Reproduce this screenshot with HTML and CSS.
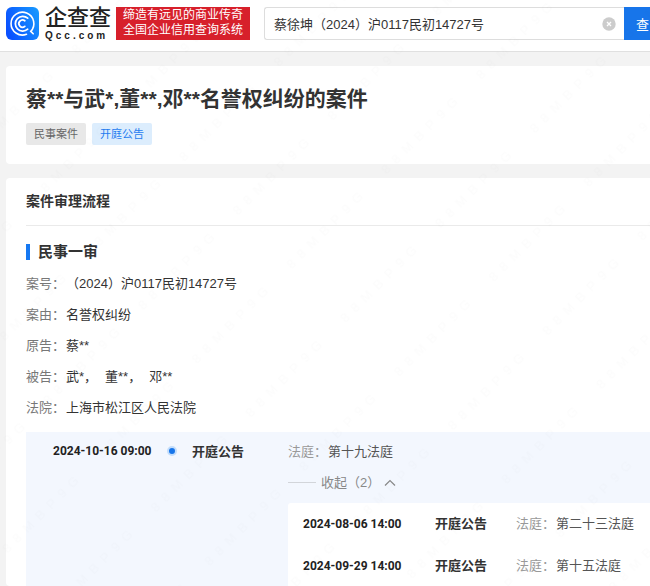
FILE: index.html
```html
<!DOCTYPE html>
<html lang="zh-CN">
<head>
<meta charset="utf-8">
<title>企查查</title>
<link rel="stylesheet" href="styles.css">
</head>
<body>
<header class="header">
  <a class="brand" href="#">
    <svg class="brand-icon" viewBox="0 0 33 33" aria-hidden="true">
      <defs>
        <linearGradient id="brand-fill" x1="0" y1="0.6" x2="1" y2="0.2">
          <stop offset="0" stop-color="#0a50ff"/>
          <stop offset="1" stop-color="#1697ff"/>
        </linearGradient>
      </defs>
      <rect width="33" height="33" rx="6" fill="url(#brand-fill)"/>
      <g fill="none" stroke="#fff" stroke-linecap="round">
        <path stroke-width="1.6" d="M20.5 27.3A11.4 11.4 0 1 1 24.8 24.4L27.2 26.8"/>
        <path stroke-width="1.7" d="M21.7 11.2A7.4 7.4 0 1 0 21.7 22.2"/>
        <path stroke-width="1.8" d="M18.8 13.8A3.6 3.6 0 1 0 18.8 19.4"/>
      </g>
    </svg>
    <span class="brand-name">
      <span class="brand-cn">企查查</span>
      <span class="brand-en">Qcc.com</span>
    </span>
    <span class="slogan">缔造有远见的商业传奇<br>全国企业信用查询系统</span>
  </a>
  <form class="search">
    <div class="search-box">
      <input class="search-input" type="text" aria-label="搜索" value="蔡徐坤（2024）沪0117民初14727号">
      <button class="search-clear" type="reset" aria-label="清除">
        <svg viewBox="0 0 14 14" aria-hidden="true">
          <circle cx="7" cy="7" r="6.7" fill="#ccc"/>
          <path d="M5 5l4 4M9 5l-4 4" stroke="#fff" stroke-width="1.3" fill="none"/>
        </svg>
      </button>
    </div>
    <button class="search-submit" type="submit">查</button>
  </form>
</header>

<main class="main">
  <section class="card summary">
    <h1 class="case-title">蔡**与武*,董**,邓**名誉权纠纷的案件</h1>
    <div class="tags">
      <span class="tag">民事案件</span>
      <span class="tag tag-blue">开庭公告</span>
    </div>
  </section>

  <section class="card process">
    <h2 class="card-title">案件审理流程</h2>
    <h3 class="stage">民事一审</h3>
    <dl class="facts">
      <div class="fact"><dt>案号：</dt><dd>（2024）沪0117民初14727号</dd></div>
      <div class="fact"><dt>案由：</dt><dd>名誉权纠纷</dd></div>
      <div class="fact"><dt>原告：</dt><dd>蔡**</dd></div>
      <div class="fact"><dt>被告：</dt><dd class="parties"><span>武*，</span><span>董**，</span><span>邓**</span></dd></div>
      <div class="fact"><dt>法院：</dt><dd>上海市松江区人民法院</dd></div>
    </dl>

    <div class="timeline">
      <time class="date">2024-10-16 09:00</time>
      <span class="dot"></span>
      <strong class="event">开庭公告</strong>
      <div class="detail">
        <p class="court"><span class="court-label">法庭：</span>第十九法庭</p>
        <button class="toggle" type="button">
          <span class="toggle-line"></span>收起（2）
          <svg class="toggle-arrow" viewBox="0 0 12 8" aria-hidden="true"><path d="M1 6.5l5-5 5 5" fill="none" stroke="#888" stroke-width="1.2"/></svg>
        </button>
        <ul class="history">
          <li class="history-row">
            <time class="date">2024-08-06 14:00</time>
            <strong class="event">开庭公告</strong>
            <p class="court"><span class="court-label">法庭：</span>第二十三法庭</p>
          </li>
          <li class="history-row">
            <time class="date">2024-09-29 14:00</time>
            <strong class="event">开庭公告</strong>
            <p class="court"><span class="court-label">法庭：</span>第十五法庭</p>
          </li>
        </ul>
      </div>
    </div>
  </section>
</main>

<svg class="watermark" aria-hidden="true">
  <defs>
    <pattern id="mark" width="134" height="76" patternUnits="userSpaceOnUse" patternTransform="translate(429 220) rotate(-45)">
      <text class="mark-text" x="2" y="14">88MBP9G</text>
    </pattern>
  </defs>
  <rect width="100%" height="100%" fill="url(#mark)"/>
</svg>
</body>
</html>
```
FILE: styles.css
```css
* {
  box-sizing: border-box;
}

body {
  margin: 0;
  height: 100vh;
  overflow: hidden;
  display: flex;
  flex-direction: column;
  background: #f3f3f3;
  color: #333;
  font-family: "Liberation Sans", "Noto Sans CJK SC", sans-serif;
  font-size: 13px;
}

h1, h2, h3, p, dl, dd, ul {
  margin: 0;
  padding: 0;
}

button, input {
  font: inherit;
  border: 0;
  padding: 0;
}

.header {
  display: flex;
  align-items: center;
  gap: 14px;
  height: 52px;
  flex: none;
  padding: 0 0 4px 6px;
  background: #fff;
  border-bottom: 1px solid #e0e0e0;
}

.brand {
  display: flex;
  align-items: center;
  text-decoration: none;
  color: #222;
}

.brand-icon {
  width: 33px;
  height: 33px;
}

.brand-name {
  display: flex;
  flex-direction: column;
  width: 71px;
  margin-left: 6px;
}

.brand-cn {
  font-size: 22px;
  line-height: 22px;
  font-weight: 500;
}

.brand-en {
  margin-top: 2px;
  font-size: 10px;
  line-height: 10px;
  font-weight: 700;
  letter-spacing: 3px;
}

.slogan {
  padding: 1px 7px 2px;
  background: #d7202b;
  color: #fff;
  font-size: 12px;
  line-height: 15px;
}

.search {
  flex: 1;
  display: flex;
  height: 33px;
  min-width: 0;
}

.search-box {
  flex: 1;
  display: flex;
  align-items: center;
  min-width: 0;
  padding: 0 8px 0 9px;
  border: 1px solid #ddd;
  border-right: 0;
  border-radius: 3px 0 0 3px;
}

.search-input {
  flex: 1;
  min-width: 0;
  color: #333;
  background: none;
  outline: 0;
}

.search-clear {
  width: 14px;
  height: 14px;
  background: none;
}

.search-clear svg {
  display: block;
}

.search-submit {
  width: 26px;
  overflow: hidden;
  padding-left: 12px;
  background: #1775ea;
  color: #fff;
  text-align: left;
}

.main {
  flex: 1;
  min-height: 0;
  display: flex;
  flex-direction: column;
  gap: 14px;
  padding: 14px 0 0 6px;
}

.card {
  padding-left: 20px;
  background: #fff;
  border-radius: 4px 0 0 4px;
}

.summary {
  padding-top: 17px;
  padding-bottom: 19px;
}

.case-title {
  font-size: 21px;
  line-height: 32px;
  font-weight: 700;
}

.tags {
  display: flex;
  gap: 6px;
  margin-top: 8px;
}

.tag {
  padding: 0 8px;
  border-radius: 2px;
  background: #e8e8e8;
  color: #666;
  font-size: 11px;
  line-height: 22px;
}

.tag-blue {
  background: #dcedfd;
  color: #1f7cf0;
}

.process {
  flex: 1;
  min-height: 0;
}

.card-title {
  border-bottom: 1px solid #eaeaea;
  font-size: 14px;
  line-height: 47px;
  font-weight: 700;
}

.stage {
  display: flex;
  align-items: center;
  gap: 8px;
  margin-top: 10px;
  font-size: 15px;
  line-height: 32px;
  font-weight: 700;
}

.stage::before {
  content: "";
  width: 4px;
  height: 16px;
  background: #1678f2;
}

.fact {
  display: flex;
  line-height: 31px;
}

.fact dt {
  width: 40px;
  color: #777;
}

.parties {
  display: flex;
  gap: 8px;
}

.timeline {
  display: grid;
  grid-template-columns: 114px 25px 96px 1fr;
  margin-top: 9px;
  padding: 4px 0 0 27px;
  background: #f3f7fe;
  line-height: 31px;
}

.date {
  font-family: Roboto, sans-serif;
  font-size: 12px;
  font-weight: 700;
  color: #222;
}

.dot {
  width: 10px;
  height: 10px;
  margin-top: 10px;
  border: 2px solid #c3ddfb;
  border-radius: 50%;
  background: #1775ea;
}

.event {
  font-weight: 700;
}

.court {
  color: #555;
}

.court-label {
  display: inline-block;
  width: 40px;
  color: #999;
}

.toggle {
  display: flex;
  align-items: center;
  background: none;
  color: #888;
  line-height: 31px;
}

.toggle-line {
  width: 28px;
  height: 1px;
  margin-right: 5px;
  background: #d2d5da;
}

.toggle-arrow {
  width: 12px;
  height: 8px;
  margin-left: 4px;
}

.history {
  margin-top: 5px;
  padding-left: 15px;
  background: #fff;
  border-radius: 3px 0 0 0;
  list-style: none;
}

.history-row {
  display: grid;
  grid-template-columns: 132px 81px 1fr;
  line-height: 42px;
}

.watermark {
  position: absolute;
  inset: 0;
  width: 100%;
  height: 100%;
  pointer-events: none;
}

.mark-text {
  font-size: 13px;
  letter-spacing: 7px;
  fill: #000;
  fill-opacity: 0.012;
}
```
